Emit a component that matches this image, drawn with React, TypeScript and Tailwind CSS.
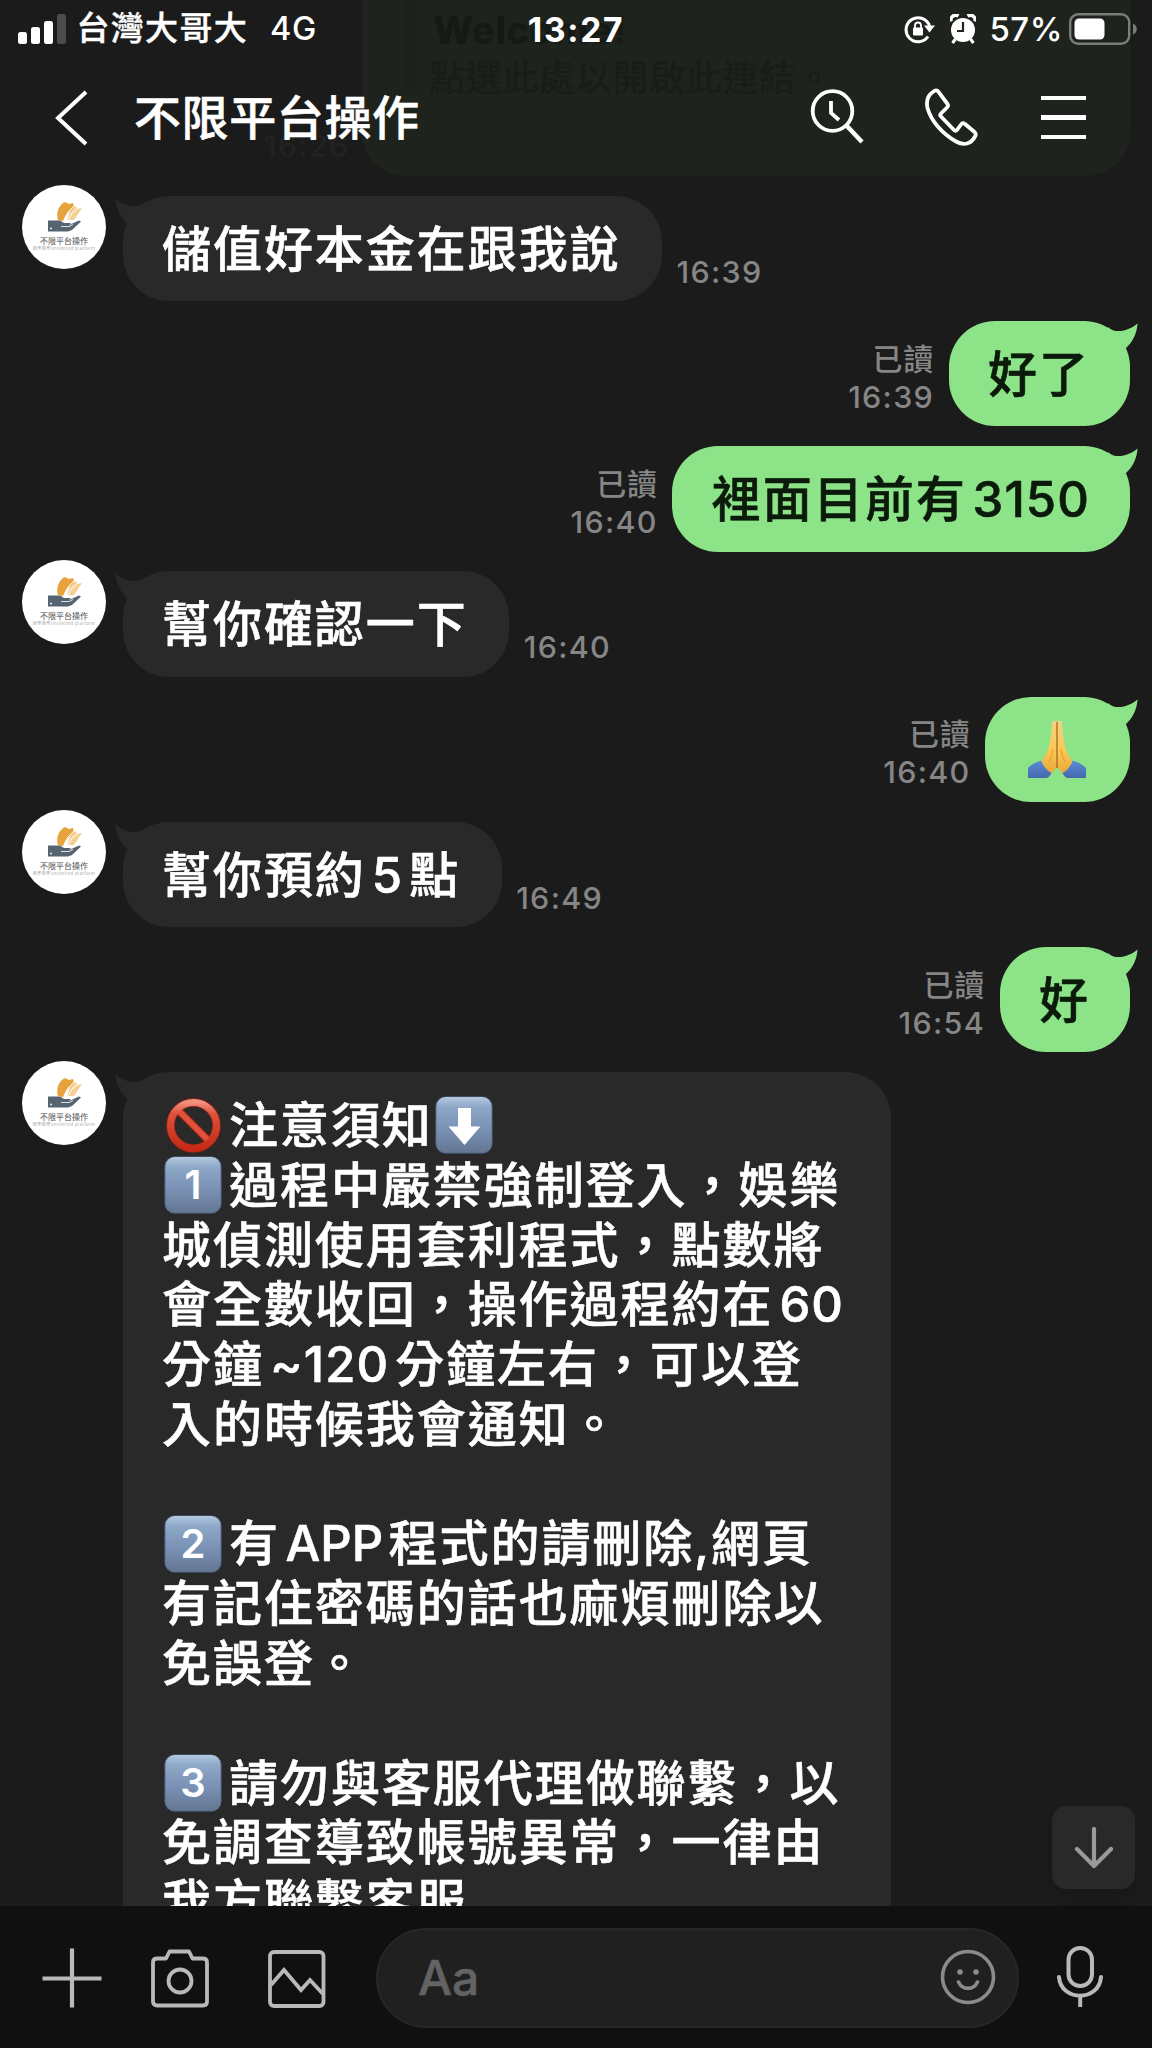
import React from "react";

interface Message {
  id: number;
  from: "me" | "other";
  time: string;
  lines: string[];
}

const messages: Message[] = [
  { id: 1, from: "other", time: "16:39", lines: ["儲值好本金在跟我說"] },
  { id: 2, from: "me", time: "16:39", lines: ["好了"] },
  { id: 3, from: "me", time: "16:40", lines: ["裡面目前有3150"] },
  { id: 4, from: "other", time: "16:40", lines: ["幫你確認一下"] },
  { id: 5, from: "me", time: "16:40", lines: ["🙏"] },
  { id: 6, from: "other", time: "16:49", lines: ["幫你預約5點"] },
  { id: 7, from: "me", time: "16:54", lines: ["好"] },
  {
    id: 8,
    from: "other",
    time: "",
    lines: [
      "🚫注意須知⬇️",
      "1️⃣過程中嚴禁強制登入，娛樂",
      "城偵測使用套利程式，點數將",
      "會全數收回，操作過程約在60",
      "分鐘~120分鐘左右，可以登",
      "入的時候我會通知。",
      "",
      "2️⃣有APP程式的請刪除,網頁",
      "有記住密碼的話也麻煩刪除以",
      "免誤登。",
      "",
      "3️⃣請勿與客服代理做聯繫，以",
      "免調查導致帳號異常，一律由",
      "我方聯繫客服",
    ],
  },
];

const TileBase = ({ children }: { children: React.ReactNode }) => (
  <svg viewBox="0 0 58 58" className="w-[58px] h-[58px] ml-[2px] mr-[7px] -mt-[1px] shrink-0">
    <defs>
      <linearGradient id="tile" x1="0" y1="0" x2="0" y2="1">
        <stop offset="0" stopColor="#b4c9e0" />
        <stop offset="0.18" stopColor="#8ea8c8" />
        <stop offset="0.6" stopColor="#7890b3" />
        <stop offset="1" stopColor="#647793" />
      </linearGradient>
    </defs>
    <rect x="0.5" y="0.5" width="57" height="57" rx="10" fill="#566d8c" />
    <rect x="1.5" y="1" width="55" height="55.5" rx="9.5" fill="url(#tile)" />
    {children}
  </svg>
);

const Keycap = ({ digit }: { digit: string }) => (
  <TileBase>
    <text
      x="29"
      y="43"
      textAnchor="middle"
      fontFamily="Inter"
      fontWeight="600"
      fontSize="40"
      letterSpacing="0"
      fill="#fff"
    >
      {digit}
    </text>
  </TileBase>
);

const DownTile = () => (
  <TileBase>
    <path d="M23 12h13v18.500h9.500L29.500 49 13.500 30.500H23z" fill="#fff" />
  </TileBase>
);

const NoEntry = () => (
  <svg viewBox="0 0 58 58" className="w-[58px] h-[58px] ml-[2px] mr-[7px] -mt-[1px] shrink-0">
    <defs>
      <linearGradient id="ban" x1="0" y1="0" x2="0" y2="1">
        <stop offset="0" stopColor="#f0907e" />
        <stop offset="0.25" stopColor="#dc5039" />
        <stop offset="1" stopColor="#c52a17" />
      </linearGradient>
    </defs>
    <g fill="none" stroke="#9c2214">
      <circle cx="29.500" cy="29.500" r="23" strokeWidth="8.500" />
      <path d="M13.500 13.500l32 32" strokeWidth="8" />
    </g>
    <path d="M13.500 13.500l32 32" fill="none" stroke="#e0523a" strokeWidth="6" />
    <circle cx="29.500" cy="29.500" r="23" fill="none" stroke="url(#ban)" strokeWidth="7" />
  </svg>
);

const Pray = () => (
  <svg viewBox="0 0 60 60" className="w-[60px] h-[60px] ml-[2px] mr-[3.500px] -mt-[2px] shrink-0">
    <defs>
      <linearGradient id="skin" x1="0" y1="0" x2="0" y2="1">
        <stop offset="0" stopColor="#f3d283" />
        <stop offset="0.6" stopColor="#fac652" />
        <stop offset="1" stopColor="#eba63a" />
      </linearGradient>
      <linearGradient id="sleeve" x1="0" y1="0" x2="0" y2="1">
        <stop offset="0" stopColor="#5c8cd9" />
        <stop offset="1" stopColor="#4468ac" />
      </linearGradient>
    </defs>
    <path d="M1 49c4-4 9-6.500 15-7.500 4 4 7 8 9 11.500-1 3-3 5-5 6H1z" fill="url(#sleeve)" />
    <path d="M59 49c-4-4-9-6.500-15-7.500-4 4-7 8-9 11.500 1 3 3 5 5 6h19z" fill="url(#sleeve)" />
    <path
      d="M30 2.500c-2-1.500-5-1-5 1.500-.5 8-1 14-2.500 20C21.500 31 18 38 14.500 42.500c2 5 6 9.500 10.500 12 1-2.500 2-4.500 5-5.500z"
      fill="url(#skin)"
    />
    <path
      d="M30 2.500c2-1.500 5-1 5 1.500.5 8 1 14 2.500 20C38.500 31 42 38 45.500 42.500c-2 5-6 9.500-10.500 12-1-2.500-2-4.500-5-5.500z"
      fill="url(#skin)"
    />
    <path d="M30 3v46" stroke="#a9701c" strokeWidth="1.400" />
    <path d="M26 30c-.5 5-2 9-4 13M34 30c.5 5 2 9 4 13" fill="none" stroke="#e39d3c" strokeWidth="1.200" />
  </svg>
);

const renderToken = (token: string, index: number) => {
  switch (token) {
    case "":
      return null;
    case "🚫":
      return <NoEntry key={index} />;
    case "⬇️":
      return <DownTile key={index} />;
    case "1️⃣":
    case "2️⃣":
    case "3️⃣":
      return <Keycap key={index} digit={token[0]} />;
    case "🙏":
      return <Pray key={index} />;
  }
  if (/^[0-9~]+$/.test(token)) {
    return (
      <span key={index} className="mx-[6px] last:mr-0 tracking-[1.100px]">
        {token}
      </span>
    );
  }
  if (/^[A-Z]+$/.test(token)) {
    return (
      <span key={index} className="mx-[5.500px] tracking-normal">
        {token}
      </span>
    );
  }
  return <span key={index}>{token}</span>;
};

const Line = ({ text }: { text: string }) => (
  <div className="flex items-center h-[59.800px] leading-[59.800px] whitespace-nowrap [-webkit-text-stroke:0.600px]">
    {text.split(/(🚫|⬇️|🙏|[123]️⃣|[A-Z]+|[0-9~]+)/u).map(renderToken)}
  </div>
);

const Avatar = () => (
  <svg viewBox="0 0 84 84" className="w-[84px] h-[84px] -mt-[11.300px] shrink-0">
    <circle cx="42" cy="42" r="42" fill="#fff" />
    <path d="M52 35l8-12-5 1-1-3-5 2-4 12z" fill="#f6cf93" />
    <path d="M36 35c-2-6 0-13 5-17l2-1 4 2 4-1 1 4-8 8-3 6z" fill="#e8a23c" />
    <path d="M42 35l4-8 6-6M46 35l4-7 6-5" fill="none" stroke="#fff" strokeWidth="1" />
    <path d="M26 35.500h12l4 2.500h7l-2 2 10-4.500 2 1L50 45l-4 1.500H26z" fill="#566472" />
    <path d="M39 41.500h8l4-2" fill="none" stroke="#fff" strokeWidth="0.800" />
    <circle cx="29" cy="43.500" r="0.900" fill="#fff" />
    <text
      x="42"
      y="58.500"
      textAnchor="middle"
      fontFamily="Noto Sans CJK TC"
      fontWeight="400"
      fontSize="8"
      letterSpacing="0"
      fill="#4a4a4a"
    >
      不限平台操作
    </text>
    <text
      x="42"
      y="65"
      textAnchor="middle"
      fontFamily="Noto Sans CJK TC"
      fontWeight="400"
      fontSize="4"
      letterSpacing="0.500"
      fill="#a5a5a5"
    >
      娛樂娛樂Unlimited platform
    </text>
  </svg>
);

const SentBubble = ({ message }: { message: Message }) => (
  <div className="flex justify-end items-end h-[105.400px] shrink-0 pr-[22.500px]">
    <div className="flex flex-col items-end mr-[14.500px] mb-[11.500px] text-[30.500px] leading-[37px] font-medium text-[#868686]">
      <span className="text-[30px] tracking-[0.800px]">已讀</span>
      <span className="tracking-[1.300px]">{message.time}</span>
    </div>
    <div className="relative h-full pl-[39.500px] pr-[39.500px] pt-[23.800px] rounded-[46px] bg-[#8de387] text-[#0b1a0a]">
      <svg viewBox="0 0 30 34" className="absolute top-[2px] -right-[8px] w-[30px] h-[34px]">
        <path d="M0 4C8 12 22 7 29.500 0.500C29 10 25 19 18 25L8 34L0 20z" fill="#8de387" />
      </svg>
      {message.lines.map((line, i) => (
        <Line key={i} text={line} />
      ))}
    </div>
  </div>
);

const ReceivedBubble = ({ message }: { message: Message }) => (
  <div className="flex items-start shrink-0 pl-[22px]">
    <Avatar />
    <div
      className={`relative ml-[16.500px] pl-[39.500px] pr-[41.500px] pt-[23.800px] pb-[21.800px] rounded-[46px] bg-[#292929] text-white ${
        message.lines.length > 1 ? "w-[768px]" : ""
      }`}
    >
      <svg viewBox="0 0 30 34" className="absolute top-[2px] -left-[8px] w-[30px] h-[34px]">
        <path d="M30 4C22 12 8 7 0.500 0.500C1 10 5 19 12 25L22 34L30 20z" fill="#292929" />
      </svg>
      {message.lines.map((line, i) => (
        <Line key={i} text={line} />
      ))}
    </div>
    {message.time && (
      <span className="self-end ml-[14.500px] mb-[11.500px] text-[30.500px] leading-[37px] font-medium tracking-[1.300px] text-[#868686]">
        {message.time}
      </span>
    )}
  </div>
);

const StatusBar = () => (
  <div className="relative flex items-center h-[58px] pl-[18px] text-[32px] font-medium text-white">
    <svg viewBox="0 0 48 30" className="w-[48px] h-[30px]">
      <rect x="0" y="18" width="9" height="12" rx="2.500" fill="#fff" />
      <rect x="13" y="13" width="9" height="17" rx="2.500" fill="#fff" />
      <rect x="26" y="7" width="9" height="23" rx="2.500" fill="#fff" />
      <rect x="39" y="0" width="9" height="30" rx="2.500" fill="#4b4b4b" />
    </svg>
    <span className="ml-[10.500px] tracking-[1.300px] text-[33px] [-webkit-text-stroke:0.400px]">台灣大哥大</span>
    <span className="ml-[22px] text-[32.500px] tracking-[0.700px] mt-[1px]">4G</span>
    <span className="absolute left-0 right-0 top-[5px] text-center text-[33.500px] tracking-[1.700px] font-bold">
      13:27
    </span>
    <div className="ml-auto flex items-center">
      <svg viewBox="0 0 32 30" className="w-[32px] h-[30px]" fill="none" stroke="#fff" strokeWidth="3">
        <path d="M25.500 12A12 12 0 1 0 24 22.500" />
        <path d="M20 11.500h11l-5.500 7z" fill="#fff" stroke="none" />
        <rect x="9" y="13.500" width="10" height="8" rx="1" fill="#fff" stroke="none" />
        <path d="M11 14v-2.500a3 3 0 0 1 6 0V14" strokeWidth="1.800" />
      </svg>
      <svg viewBox="0 0 26 30" className="ml-[14px] w-[26px] h-[30px]">
        <circle cx="13" cy="16" r="12" fill="#fff" />
        <path d="M1 7.500A5 5 0 0 1 8.500 2M25 7.500A5 5 0 0 0 17.500 2" stroke="#fff" strokeWidth="3.500" fill="none" />
        <path d="M5.500 25l-3 4M20.500 25l3 4" stroke="#fff" strokeWidth="3" />
        <path d="M13 8v9H7" stroke="#1e221d" strokeWidth="2.200" fill="none" />
      </svg>
      <span className="ml-[13px] mt-[1px] text-[33px] tracking-[0.500px]">57%</span>
      <svg viewBox="0 0 70 32" className="ml-[6px] mr-[13px] w-[70px] h-[32px]">
        <rect x="1.200" y="1.200" width="59" height="29.600" rx="8" fill="none" stroke="#7b7d7a" strokeWidth="2.400" />
        <rect x="5.500" y="5.500" width="30" height="21" rx="4.500" fill="#fff" />
        <path d="M64 10.500c5 2 5 9 0 11z" fill="#7b7d7a" />
      </svg>
    </div>
  </div>
);

const Header = () => (
  <header className="relative h-[195.800px] shrink-0">
    {/* previous messages showing through the bar */}
    <div className="absolute left-[362px] top-0 w-[768px] h-[176px] rounded-b-[44px] bg-[#1f231d] text-[#191c18]">
      <div className="absolute left-[44px] top-0 w-[9px] h-[94px] bg-[#1d211c]" />
      <div className="absolute left-[71px] top-[8px] text-[38px] leading-[44px] tracking-[0.500px] font-extrabold text-[#161a15]">
        Welcome!
      </div>
      <div className="absolute left-[67px] top-[56px] text-[36px] leading-[44px] tracking-[0.700px] font-medium whitespace-nowrap">
        點選此處以開啟此連結。
      </div>
    </div>
    <span className="absolute left-[264px] top-[127px] text-[30.500px] leading-[38px] tracking-[1.300px] font-medium text-[#222]">
      16:26
    </span>
    <StatusBar />
    <div className="relative flex items-center h-[120px] pl-[54px] pr-[66px] text-white">
      <svg viewBox="0 0 36 56" className="w-[36px] h-[56px]" fill="none" stroke="#fff" strokeWidth="4">
        <path d="M32 2L4 28l28 26" />
      </svg>
      <h1 className="ml-[44px] text-[47px] font-medium tracking-[0.600px] [-webkit-text-stroke:0.600px]">
        不限平台操作
      </h1>
      <div className="ml-auto flex items-center">
        <svg viewBox="0 0 56 58" className="mb-[3px] w-[56px] h-[58px]" fill="none" stroke="#fff" strokeWidth="3.800">
          <circle cx="23.500" cy="23" r="19.800" />
          <path d="M37 37l16 17" strokeWidth="4.500" />
          <path d="M22 13v12l8 7" />
        </svg>
        <svg
          viewBox="0 0 56 60"
          className="ml-[58px] mr-[1px] mb-[3px] w-[56px] h-[60px]"
          fill="none"
          stroke="#fff"
          strokeWidth="3.800"
          strokeLinejoin="round"
        >
          <path d="M10.500 4.500C12 3 14 3 15.500 4.800L24.500 17C25.500 18.500 25 19.500 24 20.500L18 26.500C17 27.500 17 28.500 18 29.500L31 43C32 44 33 44 34 43L38 37.500C39 36 40.500 36 42 37L51.500 45C53 46.500 53 48 52 49.500C48 57 41 59 33 54.500C19.500 47 8 34 4.500 21C3 14 5 8 10.500 4.500Z" />
        </svg>
        <div className="ml-[61px] mb-[1px] flex flex-col gap-[15px] w-[45px]">
          <div className="h-[4.500px] bg-white" />
          <div className="h-[4.500px] bg-white" />
          <div className="h-[4.500px] bg-white" />
        </div>
      </div>
    </div>
  </header>
);

const InputBar = () => (
  <footer className="flex items-center h-[142px] shrink-0 pl-[42px] pt-[2px] bg-[#101010]">
    <svg viewBox="0 0 60 60" className="w-[60px] h-[60px]" stroke="#b9b9b9" strokeWidth="4.200">
      <path d="M30 0.500v59M0.500 30.500h59" />
    </svg>
    <svg viewBox="0 0 60 60" className="ml-[47.500px] w-[60px] h-[60px]" fill="none" stroke="#b9b9b9" strokeWidth="3.800">
      <path
        d="M6 10.500H16L19.500 3.500H39L42.500 10.500H53C55.500 10.500 57 12 57 14.500V53.500C57 56 55.500 57.500 53 57.500H7C4.500 57.500 3 56 3 53.500V14.500C3 12 4.500 10.500 7 10.500"
        strokeLinejoin="round"
      />
      <circle cx="30" cy="33" r="11.500" />
    </svg>
    <svg viewBox="0 0 60 60" className="ml-[57.500px] w-[60px] h-[60px]" fill="none" stroke="#b9b9b9" strokeWidth="3.800">
      <rect x="3" y="4" width="53.500" height="54" rx="4" />
      <path d="M4 37l13-15 17 20 9-10 13 14" />
    </svg>
    <div className="flex items-center justify-between ml-[49px] w-[643px] h-[100px] pl-[40px] pr-[21px] rounded-full border-2 border-[#272727] bg-[#202020]">
      <span className="text-[48px] font-medium text-[#636363] [-webkit-text-stroke:0.500px]">Aa</span>
      <svg viewBox="0 0 56 56" className="mb-[2px] w-[56px] h-[56px]" fill="none" stroke="#8b8b8b" strokeWidth="3.600">
        <circle cx="28" cy="28" r="25.500" />
        <path d="M18.500 33c4 8.500 15 8.500 19 0" strokeLinecap="round" />
        <circle cx="20" cy="23" r="2.800" fill="#8b8b8b" stroke="none" />
        <circle cx="36" cy="23" r="2.800" fill="#8b8b8b" stroke="none" />
      </svg>
    </div>
    <svg viewBox="0 0 48 62" className="ml-[36.500px] mb-[4px] w-[48px] h-[62px]" fill="none" stroke="#b9b9b9" strokeWidth="4">
      <rect x="12.500" y="3" width="23.500" height="38" rx="11.700" />
      <path d="M3 32c2 25 40 25 42 0M24.200 50.500v10.500" strokeLinecap="round" />
    </svg>
  </footer>
);

export default function App() {
  return (
    <div
      lang="zh-TW"
      className="relative flex flex-col w-[1152px] h-[2048px] overflow-hidden bg-[#1b1b1b] font-['Inter','Noto_Sans_CJK_TC',sans-serif]"
    >
      <Header />
      <main className="flex-1 min-h-0 overflow-hidden flex flex-col gap-[19.800px] -mt-[12px] pt-[12px] text-[49px] font-medium tracking-[1.950px]">
        {messages.map((message) =>
          message.from === "me" ? (
            <SentBubble key={message.id} message={message} />
          ) : (
            <ReceivedBubble key={message.id} message={message} />
          )
        )}
      </main>
      <button className="absolute right-[17px] bottom-[159px] w-[83px] h-[83px] rounded-[14px] bg-[#292929] shadow-lg flex items-center justify-center">
        <svg
          viewBox="0 0 40 42"
          className="w-[40px] h-[42px]"
          fill="none"
          stroke="#9a9a9a"
          strokeWidth="4.200"
          strokeLinecap="round"
          strokeLinejoin="round"
        >
          <path d="M20 2v37M3 22l17 17 17-17" />
        </svg>
      </button>
      <InputBar />
    </div>
  );
}
